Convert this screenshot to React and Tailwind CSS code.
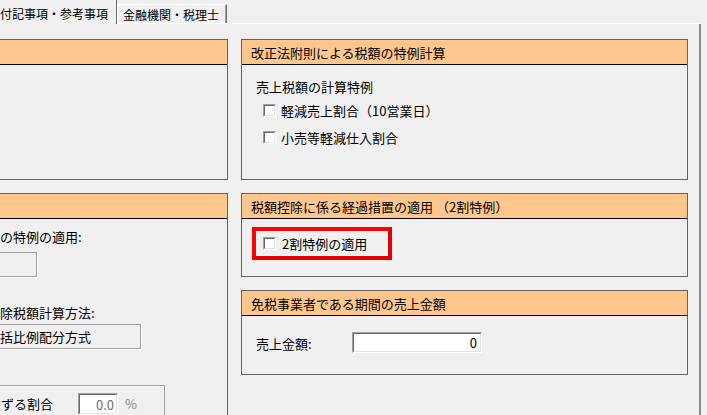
import React from 'react';

const FONT = { fontFamily: '"Noto Sans CJK JP", "Noto Sans", sans-serif' };

// classic sunken 2-pixel edge (checkbox / edit field)
const Sunken = ({ className = '', innerClassName = '', children }) => (
  <div className={`flex border border-t-[#a0a0a0] border-l-[#a0a0a0] border-r-white border-b-white ${className}`}>
    <div className={`flex-1 flex border border-t-[#696969] border-l-[#696969] border-r-[#e3e3e3] border-b-[#e3e3e3] bg-white ${innerClassName}`}>
      {children}
    </div>
  </div>
);

const CheckBox = () => <Sunken className="w-[13px] h-[13px] shrink-0" />;

const Panel = ({ title, className = '', bodyClassName = '', children }) => (
  <div className={`shrink-0 flex flex-col border border-[#646464] ${className}`}>
    <div className="h-[25px] shrink-0 bg-[#ffc78d] border-b border-black flex items-center pl-[9px] text-[13px] leading-[15px] text-black whitespace-nowrap">
      {title}
    </div>
    <div className={`flex-1 flex flex-col ${bodyClassName}`}>{children}</div>
  </div>
);

// flat read-only box from the left column
const FlatBox = ({ className = '', children }) => (
  <div className={`shrink-0 flex border-r border-b border-white ${className}`}>
    <div className="flex-1 flex items-center border border-[#a0a0a0] text-[13px] leading-[15px] whitespace-nowrap">
      {children}
    </div>
  </div>
);

export default function App() {
  return (
    <div className="w-[707px] h-[415px] overflow-hidden bg-[#f0f0f0] text-black" style={FONT}>
      {/* Tabs */}
      <div className="h-[24px] w-[699px] flex">
        <div className="w-[117px] h-full border-r border-[#696969] flex items-center pt-[3px] text-[12px] leading-[14px] whitespace-nowrap">
          付記事項・参考事項
        </div>
        <div className="flex-1 flex items-end border-b border-white">
          <div className="h-[19px] w-[110px] flex border-t border-l border-white border-r border-r-[#696969]">
            <div className="flex-1 flex items-center pl-[5px] pt-[1px] border-r border-[#a0a0a0] text-[12px] leading-[14px] whitespace-nowrap">
              金融機関・税理士
            </div>
          </div>
        </div>
      </div>

      {/* Tab page */}
      <div className="w-[701px] h-[400px] border-r-2 border-[#8a8a8a] flex pt-[15px]">
        {/* Left column (scrolled, partly out of view) */}
        <div className="ml-[-12px] w-[240px] shrink-0 flex flex-col gap-[13px]">
          <Panel title="" className="h-[141px] border-l-0" />
          <Panel title="" className="h-[300px] border-l-0 border-b-0" bodyClassName="pl-[12px]">
            <div className="mt-[10px] h-[15px] text-[13px] leading-[15px] whitespace-nowrap">の特例の適用:</div>
            <FlatBox className="mt-[8px] ml-[-12px] w-[50px] h-[26px]" />
            <div className="mt-[27px] h-[15px] text-[13px] leading-[15px] whitespace-nowrap">除税額計算方法:</div>
            <FlatBox className="mt-[4px] ml-[-12px] w-[154px] h-[26px]">
              <span className="pl-[11px]">括比例配分方式</span>
            </FlatBox>
            <div className="mt-[35px] ml-[-12px] w-[177px] h-[40px] shrink-0 border-t border-r border-[#a0a0a0] flex">
              <div className="flex-1 border-t border-l border-white flex items-start pt-[6px] pl-[12px]">
                <div className="w-[77px] mt-[3px] text-[13px] leading-[15px] whitespace-nowrap">ずる割合</div>
                <Sunken className="w-[40px] h-[22px]" innerClassName="justify-end items-center pr-[2px] text-[13px] leading-[15px] text-[#6d6d6d]">
                  0.0
                </Sunken>
                <div className="ml-[7px] mt-[3px] text-[13px] leading-[15px] text-[#8a8a8a]">%</div>
              </div>
            </div>
          </Panel>
        </div>

        {/* Right column */}
        <div className="ml-[13px] w-[447px] shrink-0 flex flex-col gap-[13px]">
          <Panel title="改正法附則による税額の特例計算" className="h-[141px]" bodyClassName="pl-[14px]">
            <div className="mt-[14px] h-[15px] text-[13px] leading-[15px] whitespace-nowrap">売上税額の計算特例</div>
            <div className="mt-[9px] ml-[7px] h-[15px] flex items-center gap-[5px] text-[13px] leading-[15px] whitespace-nowrap">
              <CheckBox />
              <span>軽減売上割合（10営業日）</span>
            </div>
            <div className="mt-[12px] ml-[7px] h-[15px] flex items-center gap-[5px] text-[13px] leading-[15px] whitespace-nowrap">
              <CheckBox />
              <span>小売等軽減仕入割合</span>
            </div>
          </Panel>

          <Panel title="税額控除に係る経過措置の適用 （2割特例）" className="h-[84px]" bodyClassName="pl-[10px] pt-[8px]">
            <div className="w-[140px] h-[33px] border-4 border-[#ff0000] border-r-[#e80000] border-b-[#e80000] flex">
              <div className="flex-1 border border-white flex items-center pl-[6px] gap-[6px] text-[13px] leading-[15px] whitespace-nowrap">
                <CheckBox />
                <span>2割特例の適用</span>
              </div>
            </div>
          </Panel>

          <Panel title="免税事業者である期間の売上金額" className="h-[85px]" bodyClassName="pl-[14px] pt-[16px]">
            <div className="flex items-start">
              <div className="w-[96px] mt-[4px] text-[13px] leading-[15px] whitespace-nowrap">売上金額:</div>
              <Sunken className="w-[130px] h-[21px]" innerClassName="justify-end items-center pr-[3px] text-[13px] leading-[15px]">
                0
              </Sunken>
            </div>
          </Panel>
        </div>
      </div>
    </div>
  );
}
